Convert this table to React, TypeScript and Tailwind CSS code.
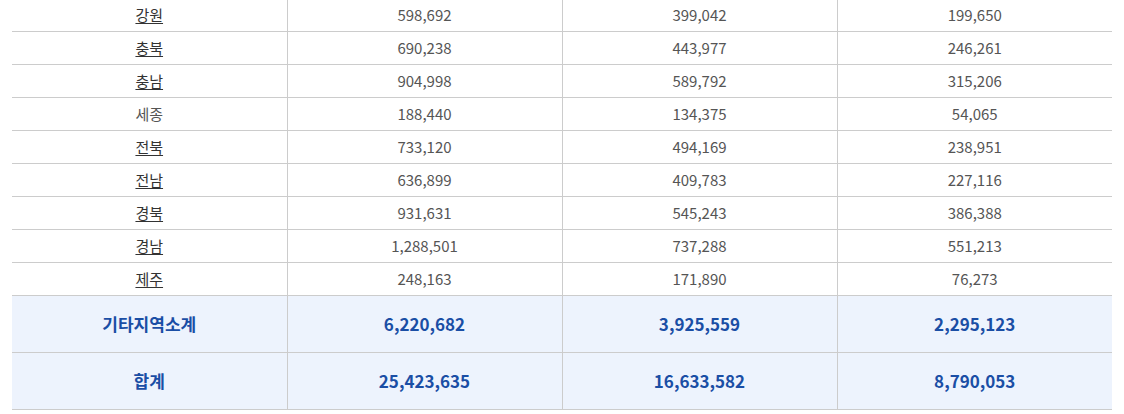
import React from 'react';

interface RegionRow {
  name: string;
  total: string;
  a: string;
  b: string;
  link?: boolean;
}

const rows: RegionRow[] = [
  { name: '강원', total: '598,692', a: '399,042', b: '199,650', link: true },
  { name: '충북', total: '690,238', a: '443,977', b: '246,261', link: true },
  { name: '충남', total: '904,998', a: '589,792', b: '315,206', link: true },
  { name: '세종', total: '188,440', a: '134,375', b: '54,065' },
  { name: '전북', total: '733,120', a: '494,169', b: '238,951', link: true },
  { name: '전남', total: '636,899', a: '409,783', b: '227,116', link: true },
  { name: '경북', total: '931,631', a: '545,243', b: '386,388', link: true },
  { name: '경남', total: '1,288,501', a: '737,288', b: '551,213', link: true },
  { name: '제주', total: '248,163', a: '171,890', b: '76,273', link: true },
];

const sums = [
  { name: '기타지역소계', total: '6,220,682', a: '3,925,559', b: '2,295,123' },
  { name: '합계', total: '25,423,635', a: '16,633,582', b: '8,790,053' },
];

const App: React.FC = () => {
  return (
    <div
      className="w-[1124px] h-[414px] overflow-hidden bg-white px-3"
      style={{ fontFamily: '"Noto Sans CJK KR", "Noto Sans", sans-serif' }}
    >
      <table className="w-full table-fixed border-collapse -mt-[2px]">
        <tbody>
          {rows.map((r) => (
            <tr key={r.name} className="h-[33px] border-b border-[#cccccc] text-[15px] text-[#555555]">
              <td className="text-center border-r border-[#cccccc] p-0 pt-px">
                {r.link ? (
                  <a className="text-[#333333] underline underline-offset-[2px] cursor-pointer">{r.name}</a>
                ) : (
                  <span>{r.name}</span>
                )}
              </td>
              <td className="text-center border-r border-[#cccccc] p-0 pt-px">{r.total}</td>
              <td className="text-center border-r border-[#cccccc] p-0 pt-px">{r.a}</td>
              <td className="text-center p-0 pt-px">{r.b}</td>
            </tr>
          ))}
          {sums.map((s) => (
            <tr key={s.name} className="h-[57px] border-b border-[#cccccc] bg-[#edf3fd] text-[17px] font-bold text-[#1a4ea5]">
              <td className="text-center border-r border-[#cccccc] p-0">{s.name}</td>
              <td className="text-center border-r border-[#cccccc] p-0">{s.total}</td>
              <td className="text-center border-r border-[#cccccc] p-0">{s.a}</td>
              <td className="text-center p-0">{s.b}</td>
            </tr>
          ))}
        </tbody>
      </table>
    </div>
  );
};

export default App;
